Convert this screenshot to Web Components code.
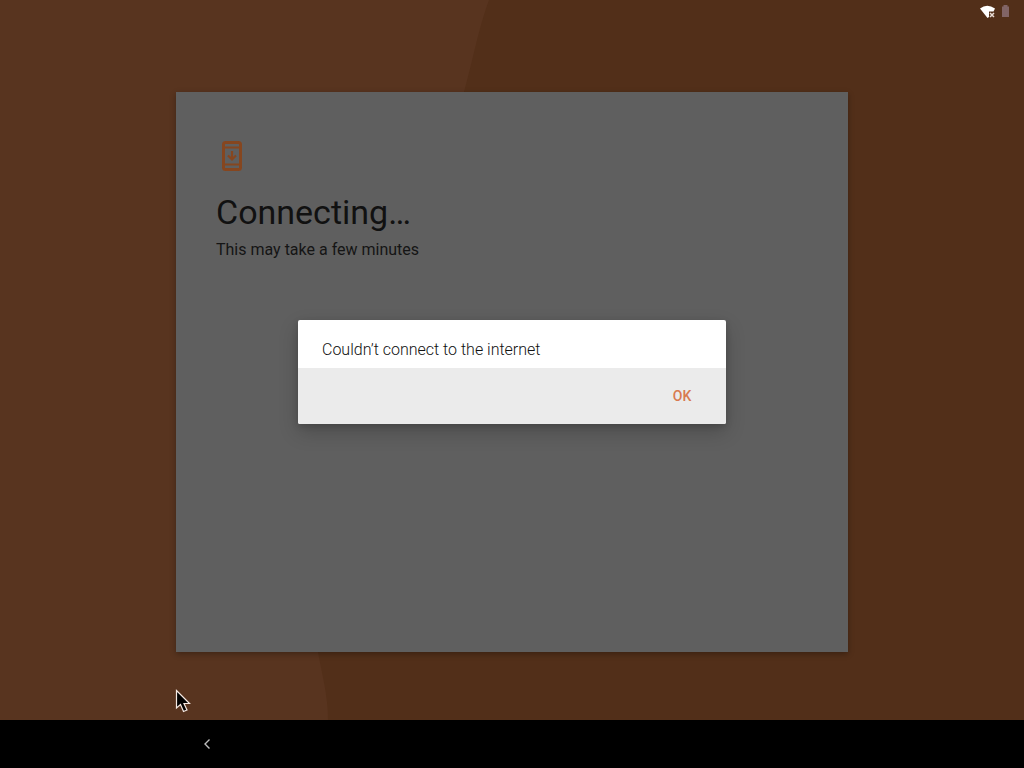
<!DOCTYPE html>
<html lang="en">
<head>
<meta charset="utf-8">
<meta name="viewport" content="width=device-width, initial-scale=1">
<title>Device setup</title>
<style>
html, body { height: 100%; margin: 0; }
body { font-family: Roboto, "Liberation Sans", sans-serif; background: #000; }
</style>
</head>
<body>
<setup-screen>
  <status-bar slot="status"></status-bar>
  <setup-card>
    <span slot="title">Connecting…</span>
    <span slot="summary">This may take a few minutes</span>
  </setup-card>
  <alert-dialog slot="dialog" action="OK">Couldn’t connect to the internet</alert-dialog>
  <nav-bar slot="nav"></nav-bar>
  <mouse-pointer slot="pointer"></mouse-pointer>
</setup-screen>
<script>
function define(name, html, setup) {
  const template = document.createElement('template');
  template.innerHTML = html;
  customElements.define(name, class extends HTMLElement {
    constructor() {
      super();
      this.attachShadow({ mode: 'open' }).append(template.content.cloneNode(true));
    }
    connectedCallback() { if (setup) setup(this); }
  });
}

define('setup-screen', `
<style>
:host { display: flex; flex-direction: column; min-height: 100vh; position: relative; overflow: hidden; }
.desk { flex: 1; display: flex; flex-direction: column; position: relative; background: #522f19; }
.wall { position: absolute; inset: 0; width: 100%; height: 100%; }
slot[name=status], main { position: relative; }
main { flex: 1; display: grid; place-items: center; }
.layer { position: absolute; inset: 24px 0 0; display: grid; place-items: center; }
</style>
<div class="desk">
  <svg class="wall" viewBox="0 0 1024 720" preserveAspectRatio="none" aria-hidden="true">
    <path fill="#522f19" d="M0 0H1024V720H0Z"/>
    <path fill="#58341f" d="M0 0H489C478 30 473 60 464 92C420 280 290 480 318 652C322 675 328 695 328 720H0Z"/>
  </svg>
  <slot name="status"></slot>
  <main><slot></slot></main>
  <div class="layer"><slot name="dialog"></slot></div>
</div>
<slot name="nav"></slot>
<slot name="pointer"></slot>`);

define('status-bar', `
<style>
:host { display: flex; justify-content: flex-end; align-items: center; height: 24px; padding-right: 12px; position: relative; }
svg { display: block; }
</style>
<svg width="36" height="24" viewBox="0 0 36 24" role="img" aria-label="Wi-Fi without internet, battery">
  <path fill="#fff" d="M4 8.500Q11 3 19 8.500L17.500 11.500H13V17L11.500 18Z"/>
  <path stroke="#e9ddd6" stroke-width="1.500" d="M14 13l4 4M18 13l-4 4"/>
  <path fill="#816465" d="M26 6.500H27.500V5H31.500V6.500H33V17H26Z"/>
</svg>`);

define('setup-card', `
<style>
:host { display: block; box-sizing: border-box; width: min(672px, 100%); min-height: 560px; padding: 48px 40px; background: #5f5f5f; box-shadow: 0 2px 6px rgba(0,0,0,.3); }
svg { display: block; width: 32px; height: 32px; }
h1 { margin: 20px 0 0; font-size: 34px; line-height: 40px; font-weight: 400; color: #111; }
p { margin: 8px 0 0; font-size: 16px; line-height: 20px; color: #151515; }
</style>
<svg viewBox="0 0 32 32" fill="none" stroke="#86461f" aria-hidden="true">
  <rect x="7.500" y="2.500" width="17" height="27" rx="2" stroke-width="3"/>
  <path stroke-width="2" d="M8 7.500H24M8 24.500H24"/>
  <path stroke-width="2.200" d="M16 11V19M12 15.500L16 19.500L20 15.500"/>
</svg>
<h1><slot name="title"></slot></h1>
<p><slot name="summary"></slot></p>`);

define('alert-dialog', `
<style>
:host { display: block; width: min(428px, 100%); border-radius: 2px; overflow: hidden; background: #fff; box-shadow: 0 8px 20px rgba(0,0,0,.2), 0 2px 6px rgba(0,0,0,.15); }
p { margin: 0; padding: 20px 24px 8px; font-size: 16px; line-height: 20px; font-weight: 300; color: #111; }
footer { display: flex; justify-content: flex-end; padding: 8px 12px; background: #ebebeb; }
button { width: 64px; height: 40px; border: 0; padding: 0; background: none; color: #d87a50; font: 500 14px/20px Roboto, "Liberation Sans", sans-serif; }
</style>
<div role="alertdialog" aria-labelledby="message">
  <p id="message"><slot></slot></p>
  <footer><button type="button"></button></footer>
</div>`, host => {
  host.shadowRoot.querySelector('button').textContent = host.getAttribute('action');
});

define('nav-bar', `
<style>
:host { display: flex; align-items: center; height: 48px; background: #000; padding-left: 18%; }
button { display: grid; place-items: center; width: 48px; height: 48px; border: 0; padding: 0; background: none; }
</style>
<button type="button" aria-label="Back">
  <svg width="16" height="16" viewBox="0 0 16 16" fill="none" stroke="#bdbdbd" stroke-width="1.400"><path d="M9.500 3.500L5 8L9.500 12.500"/></svg>
</button>`);

define('mouse-pointer', `
<style>
:host { position: absolute; left: 175px; top: 689px; pointer-events: none; }
svg { display: block; }
</style>
<svg width="16" height="24" viewBox="0 0 16 24" aria-hidden="true">
  <path fill="#000" stroke="#f4e8e2" stroke-width="1.200" d="M1.500 1.500V19L5.500 15.500L8.500 22.500L12 21L9 14.500H14.500Z"/>
</svg>`);
</script>
</body>
</html>
